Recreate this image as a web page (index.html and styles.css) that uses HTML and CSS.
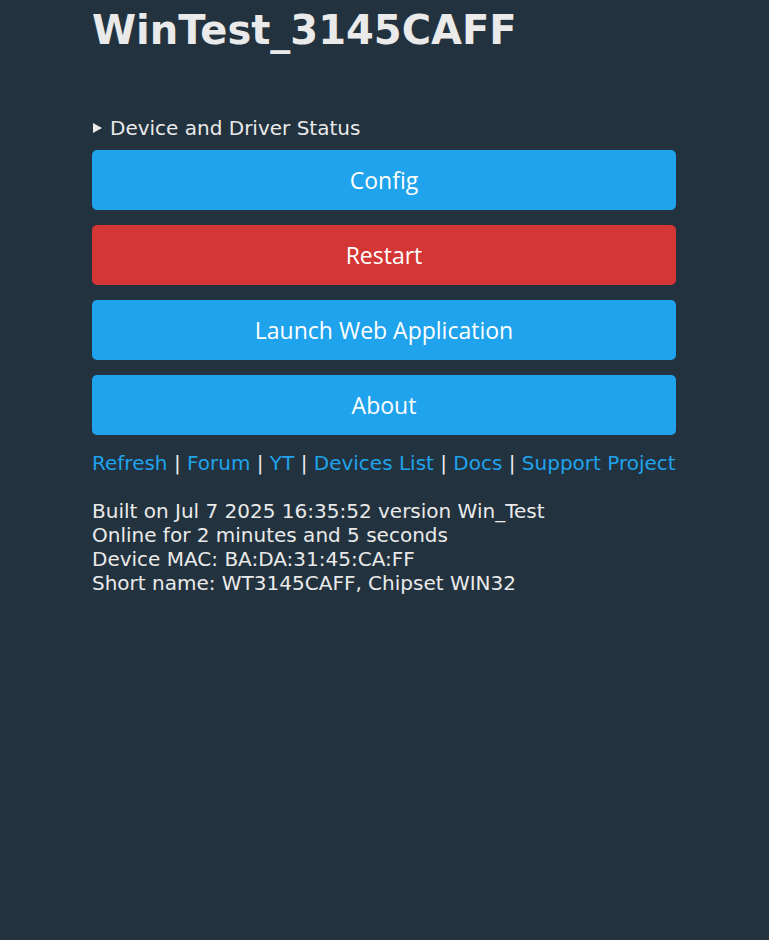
FILE: index.html
```html
<!DOCTYPE html>
<html>
<head>
<meta charset="utf-8">
<link rel="stylesheet" href="styles.css">
</head>
<body>
<div class="page">
  <h1 class="title">WinTest_3145CAFF</h1>
  <details class="status">
    <summary>Device and Driver Status</summary>
  </details>
  <div class="buttons">
    <button class="btn">Config</button>
    <button class="btn btn-red">Restart</button>
    <button class="btn">Launch Web Application</button>
    <button class="btn">About</button>
  </div>
  <div class="links">
    <a href="#">Refresh</a> | <a href="#">Forum</a> | <a href="#">YT</a> | <a href="#">Devices List</a> | <a href="#">Docs</a> | <a href="#">Support Project</a>
  </div>
  <div class="info">
    <div>Built on Jul 7 2025 16:35:52 version Win_Test</div>
    <div>Online for 2 minutes and 5 seconds</div>
    <div>Device MAC: BA:DA:31:45:CA:FF</div>
    <div>Short name: WT3145CAFF, Chipset WIN32</div>
  </div>
</div>
</body>
</html>
```
FILE: styles.css
```css
html, body {
  margin: 0;
  padding: 0;
  background: #22323f;
}
body {
  color: #eaeaea;
  font-family: "DejaVu Sans", Verdana, sans-serif;
  font-size: 20px;
}
.page {
  width: 585px;
  margin: 0 auto;
}
.title {
  margin: 0;
  font-size: 40px;
  line-height: 60px;
  font-weight: bold;
}
.status {
  margin-top: 56px;
  line-height: 24px;
  height: 24px;
}
.status summary {
  cursor: pointer;
  list-style: none;
  display: flex;
  align-items: center;
  height: 24px;
}
.status summary::-webkit-details-marker {
  display: none;
}
.status summary::before {
  content: "";
  width: 0;
  height: 0;
  border-left: 9px solid #eaeaea;
  border-top: 5px solid transparent;
  border-bottom: 5px solid transparent;
  margin-left: 1px;
  margin-right: 8px;
}
.buttons {
  display: flex;
  flex-direction: column;
  gap: 15px;
  margin-top: 10px;
}
.btn {
  display: block;
  width: 584px;
  height: 60px;
  border: 0;
  border-radius: 5px;
  background: #1fa3ec;
  color: #fff;
  font-family: "Open Sans", sans-serif;
  font-size: 23px;
  padding: 0;
}
.btn-red {
  background: #d43535;
}
.links {
  margin-top: 16px;
  line-height: 24px;
  white-space: nowrap;
}
.links a {
  color: #1fa3ec;
  text-decoration: none;
}
.info {
  margin-top: 24px;
  line-height: 24px;
}
```
